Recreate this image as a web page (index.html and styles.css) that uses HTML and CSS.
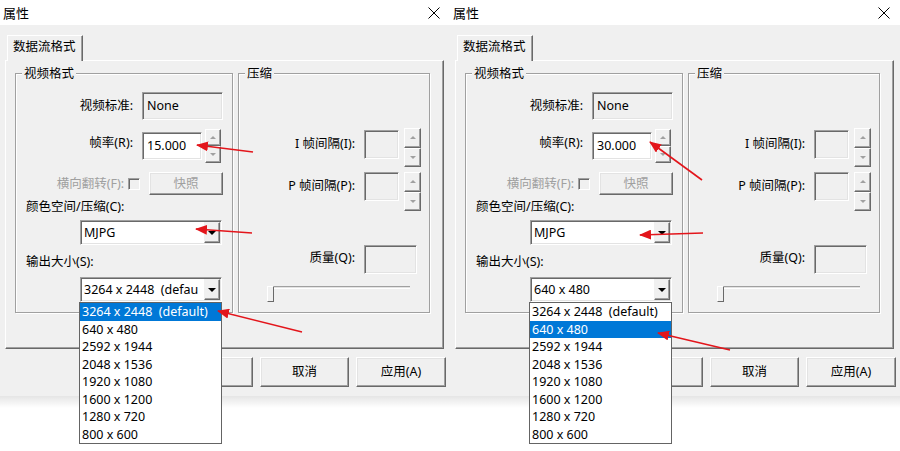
FILE: index.html
```html
<!DOCTYPE html>
<html lang="zh-CN">
<head>
<meta charset="utf-8">
<title>属性</title>
<link rel="stylesheet" href="styles.css">
</head>
<body>
<div class="screen">

  <div class="dialog">
    <div class="titlebar">
      <span class="title">属性</span>
      <svg class="close" viewBox="0 0 12 12"><path d="M0.5 0.5 L11.5 11.5 M11.5 0.5 L0.5 11.5" stroke="#000" stroke-width="1" fill="none"/></svg>
    </div>
    <div class="body">
      <div class="tabs"><div class="tab">数据流格式</div></div>
      <div class="pane">
        <fieldset class="group video">
          <legend>视频格式</legend>
          <div class="row r-std"><span class="lbl w117">视频标准:</span><div class="field std">None</div></div>
          <div class="row r-fps"><span class="lbl w117 up">帧率(R):</span><div class="field edit fps">15.000</div><div class="spin s34"><div class="sb"><i class="tri-up"></i></div><div class="sb"><i class="tri-down"></i></div></div></div>
          <div class="row r-flip"><span class="lbl w108 dis">横向翻转(F):</span><span class="check"></span><div class="btn snap dis">快照</div></div>
          <div class="cap c1">颜色空间/压缩(C):</div>
          <div class="combo c-mjpg"><span class="ctext">MJPG</span><span class="dbtn"><i class="tri-dark"></i></span></div>
          <div class="cap c2">输出大小(S):</div>
          <div class="combo c-size"><span class="ctext">3264 x 2448  (defau</span><span class="dbtn"><i class="tri-dark"></i></span></div>
        </fieldset>
        <fieldset class="group comp">
          <legend>压缩</legend>
          <div class="crow r-i"><span class="lbl w116 m8">I 帧间隔(I):</span><div class="field small b2"></div><div class="spin s39"><div class="sb"><i class="tri-up"></i></div><div class="sb"><i class="tri-down"></i></div></div></div>
          <div class="crow r-p"><span class="lbl w116 m6">P 帧间隔(P):</span><div class="field small"></div><div class="spin s39"><div class="sb"><i class="tri-up"></i></div><div class="sb"><i class="tri-down"></i></div></div></div>
          <div class="crow r-q"><span class="lbl w116 m5">质量(Q):</span><div class="field qual"></div></div>
          <div class="slider"><div class="track"></div><div class="thumb"></div></div>
        </fieldset>
      </div>
      <div class="actions">
        <div class="btn act">确定</div>
        <div class="btn act">取消</div>
        <div class="btn act wide">应用(A)</div>
      </div>
    </div>
    <div class="shade"></div>
    <ul class="dropdown">
      <li class="sel">3264 x 2448  (default)</li>
      <li>640 x 480</li>
      <li>2592 x 1944</li>
      <li>2048 x 1536</li>
      <li>1920 x 1080</li>
      <li>1600 x 1200</li>
      <li>1280 x 720</li>
      <li>800 x 600</li>
    </ul>
  </div>

  <div class="dialog">
    <div class="titlebar">
      <span class="title">属性</span>
      <svg class="close" viewBox="0 0 12 12"><path d="M0.5 0.5 L11.5 11.5 M11.5 0.5 L0.5 11.5" stroke="#000" stroke-width="1" fill="none"/></svg>
    </div>
    <div class="body">
      <div class="tabs"><div class="tab">数据流格式</div></div>
      <div class="pane">
        <fieldset class="group video">
          <legend>视频格式</legend>
          <div class="row r-std"><span class="lbl w117">视频标准:</span><div class="field std">None</div></div>
          <div class="row r-fps"><span class="lbl w117 up">帧率(R):</span><div class="field edit fps">30.000</div><div class="spin s34"><div class="sb"><i class="tri-up"></i></div><div class="sb"><i class="tri-down"></i></div></div></div>
          <div class="row r-flip"><span class="lbl w108 dis">横向翻转(F):</span><span class="check"></span><div class="btn snap dis">快照</div></div>
          <div class="cap c1">颜色空间/压缩(C):</div>
          <div class="combo c-mjpg"><span class="ctext">MJPG</span><span class="dbtn"><i class="tri-dark"></i></span></div>
          <div class="cap c2">输出大小(S):</div>
          <div class="combo c-size"><span class="ctext">640 x 480</span><span class="dbtn"><i class="tri-dark"></i></span></div>
        </fieldset>
        <fieldset class="group comp">
          <legend>压缩</legend>
          <div class="crow r-i"><span class="lbl w116 m8">I 帧间隔(I):</span><div class="field small b2"></div><div class="spin s39"><div class="sb"><i class="tri-up"></i></div><div class="sb"><i class="tri-down"></i></div></div></div>
          <div class="crow r-p"><span class="lbl w116 m6">P 帧间隔(P):</span><div class="field small"></div><div class="spin s39"><div class="sb"><i class="tri-up"></i></div><div class="sb"><i class="tri-down"></i></div></div></div>
          <div class="crow r-q"><span class="lbl w116 m5">质量(Q):</span><div class="field qual"></div></div>
          <div class="slider"><div class="track"></div><div class="thumb"></div></div>
        </fieldset>
      </div>
      <div class="actions">
        <div class="btn act">确定</div>
        <div class="btn act">取消</div>
        <div class="btn act wide">应用(A)</div>
      </div>
    </div>
    <div class="shade"></div>
    <ul class="dropdown">
      <li>3264 x 2448  (default)</li>
      <li class="sel">640 x 480</li>
      <li>2592 x 1944</li>
      <li>2048 x 1536</li>
      <li>1920 x 1080</li>
      <li>1600 x 1200</li>
      <li>1280 x 720</li>
      <li>800 x 600</li>
    </ul>
  </div>

  <svg class="arrows" viewBox="0 0 900 451" width="900" height="451">
    <defs>
      <marker id="ah" markerUnits="userSpaceOnUse" markerWidth="12" markerHeight="10" refX="11" refY="5" orient="auto">
        <path d="M0 0 L12 5 L0 10 Z" fill="#e3151b"/>
      </marker>
    </defs>
    <g stroke="#e3151b" stroke-width="1.6" fill="none" marker-end="url(#ah)">
      <line x1="253" y1="152" x2="197" y2="145"/>
      <line x1="252" y1="233" x2="196" y2="229"/>
      <line x1="302" y1="332" x2="218" y2="311"/>
      <line x1="702" y1="180" x2="650" y2="142"/>
      <line x1="703" y1="233" x2="640" y2="235"/>
      <line x1="730" y1="350" x2="658" y2="333"/>
    </g>
  </svg>
</div>
</body>
</html>
```
FILE: styles.css
```css
* { box-sizing: border-box; margin: 0; padding: 0; }
html, body { width: 900px; height: 451px; overflow: hidden; background: #fff; }
body {
  font-family: "Noto Sans", "Noto Sans CJK SC", sans-serif;
  font-size: 12.5px;
  line-height: 16px;
  color: #000;
}
.screen { position: relative; display: flex; width: 900px; height: 451px; }
.dialog { position: relative; flex: none; width: 450px; height: 451px; }

.titlebar {
  height: 25px; background: #fff;
  display: flex; align-items: center; justify-content: space-between;
  padding: 0 10px 0 3px;
}
.title { font-size: 13px; }
.close { width: 12px; height: 12px; display: block; }

.body { height: 371px; background: #f0f0f0; padding: 10px 0 0 5px; }
.shade { height: 12px; background: linear-gradient(rgba(0,0,0,0.10), rgba(0,0,0,0)); }

.tabs { display: flex; height: 25px; padding-left: 2px; }
.tab {
  position: relative; z-index: 1;
  width: 76px; height: 26px; margin-bottom: -1px;
  background: #f0f0f0;
  border-top: 1px solid #fff; border-left: 1px solid #fff; border-right: 1px solid #696969;
  box-shadow: inset -1px 0 0 #a0a0a0;
  padding: 3px 0 0 5px;
}
.pane {
  width: 439px; height: 289px;
  border-top: 1px solid #fff; border-left: 1px solid #fff;
  border-right: 1px solid #696969; border-bottom: 1px solid #696969;
  box-shadow: inset -1px -1px 0 #a0a0a0;
  display: flex; align-items: flex-start; gap: 5px; padding-left: 9px;
}

.group {
  min-width: 0; padding: 0; margin-top: 5px; height: 247px;
  border: 1px solid #a0a0a0;
  box-shadow: inset 1px 1px 0 #fff, 1px 1px 0 #fff;
}
.group legend { margin-left: 6px; padding: 0 2px; line-height: 15px; background: #f0f0f0; }
.video { width: 218px; }
.comp { width: 192px; }

.row { display: flex; align-items: center; }
.lbl { flex: none; text-align: right; white-space: nowrap; }
.w117 { width: 117px; margin-right: 9px; }
.w108 { width: 108px; margin-right: 4px; }
.w116 { width: 116px; margin-right: 9px; }
.up { margin-bottom: 6px; }
.dis { color: #a0a0a0; }

.field {
  flex: none;
  border: 1px solid; border-color: #a0a0a0 #fff #fff #a0a0a0;
  box-shadow: inset 1px 1px 0 #696969, inset -1px -1px 0 #e3e3e3;
  background: #f0f0f0;
  padding: 0 4px;
  white-space: nowrap;
}
.r-std { margin-top: 11px; height: 28px; }
.std { width: 81px; height: 28px; padding-top: 5px; }
.r-fps { margin-top: 9px; height: 34px; }
.fps { width: 60px; height: 28px; background: #fff; padding-top: 5px; }

.spin { flex: none; display: flex; flex-direction: column; width: 16px; }
.s34 { height: 34px; margin-left: 3px; }
.s39 { height: 39px; width: 17px; margin-left: 5px; }
.sb {
  flex: 1; display: flex; align-items: center; justify-content: center;
  border: 1px solid; border-color: #fff #696969 #696969 #fff;
  box-shadow: inset -1px -1px 0 #a0a0a0;
  background: #f0f0f0;
}
.tri-up { width: 0; height: 0; border-left: 3px solid transparent; border-right: 3px solid transparent; border-bottom: 3px solid #a0a0a0; }
.tri-down { width: 0; height: 0; border-left: 3px solid transparent; border-right: 3px solid transparent; border-top: 3px solid #a0a0a0; }
.tri-dark { width: 0; height: 0; border-left: 4px solid transparent; border-right: 4px solid transparent; border-top: 4px solid #000; }

.r-flip { margin-top: 9px; height: 23px; }
.check {
  flex: none; width: 12px; height: 12px; margin-right: 9px;
  border: 1px solid; border-color: #a0a0a0 #fff #fff #a0a0a0;
  box-shadow: inset 1px 1px 0 #696969;
  background: #f0f0f0;
}
.btn {
  flex: none; display: flex; align-items: center; justify-content: center;
  border: 1px solid; border-color: #fff #696969 #696969 #fff;
  box-shadow: inset -1px -1px 0 #a0a0a0, inset 1px 1px 0 #e3e3e3;
  background: #f0f0f0;
}
.snap { width: 74px; height: 23px; }

.cap { padding-left: 10px; }
.c1 { margin-top: 4px; }
.c2 { margin-top: 9px; }
.combo {
  display: flex; width: 142px; height: 25px; margin-left: 64px;
  border: 1px solid; border-color: #a0a0a0 #fff #fff #a0a0a0;
  box-shadow: inset 1px 1px 0 #696969, inset -1px -1px 0 #e3e3e3;
  background: #fff; padding: 1px;
}
.c-mjpg { margin-top: 5px; }
.c-size { margin-top: 7px; }
.ctext { flex: 1; overflow: hidden; white-space: pre; padding-left: 2px; line-height: 21px; }
.dbtn {
  flex: none; width: 16px; display: flex; align-items: center; justify-content: center;
  border: 1px solid; border-color: #f0f0f0 #696969 #696969 #f0f0f0;
  box-shadow: inset -1px -1px 0 #a0a0a0;
  background: #f0f0f0;
}

.crow { display: flex; align-items: flex-start; }
.m8 { margin-top: 8px; }
.m6 { margin-top: 6px; }
.m5 { margin-top: 5px; }
.b2 { margin-top: 2px; }
.r-i { margin-top: 47px; height: 39px; }
.r-p { margin-top: 5px; height: 39px; }
.r-q { margin-top: 34px; height: 29px; }
.small { width: 35px; height: 29px; }
.qual { width: 53px; height: 29px; }

.slider { position: relative; margin: 12px 0 0 28px; width: 143px; height: 16px; }
.track { margin: 5px 0 0 5px; height: 3px; border-top: 1px solid #a0a0a0; border-bottom: 1px solid #fff; background: #e3e3e3; }
.thumb {
  position: absolute; left: 0; top: 0; width: 7px; height: 16px;
  border: 1px solid; border-color: #fff #696969 #696969 #fff;
  background: #f0f0f0;
}

.actions { display: flex; justify-content: flex-end; gap: 7px; margin-top: 8px; padding-right: 4px; }
.act { width: 89px; height: 30px; }
.act.wide { width: 90px; }

.dropdown {
  position: absolute; left: 79px; top: 302px; z-index: 5;
  width: 143px; height: 142px;
  list-style: none; background: #fff;
  border: 1px solid #646464;
}
.dropdown li { height: 17.5px; line-height: 17.5px; padding-left: 2px; white-space: pre; }
.dropdown li.sel { background: #0078d7; color: #fff; }

.arrows { position: absolute; left: 0; top: 0; z-index: 10; pointer-events: none; }
```
